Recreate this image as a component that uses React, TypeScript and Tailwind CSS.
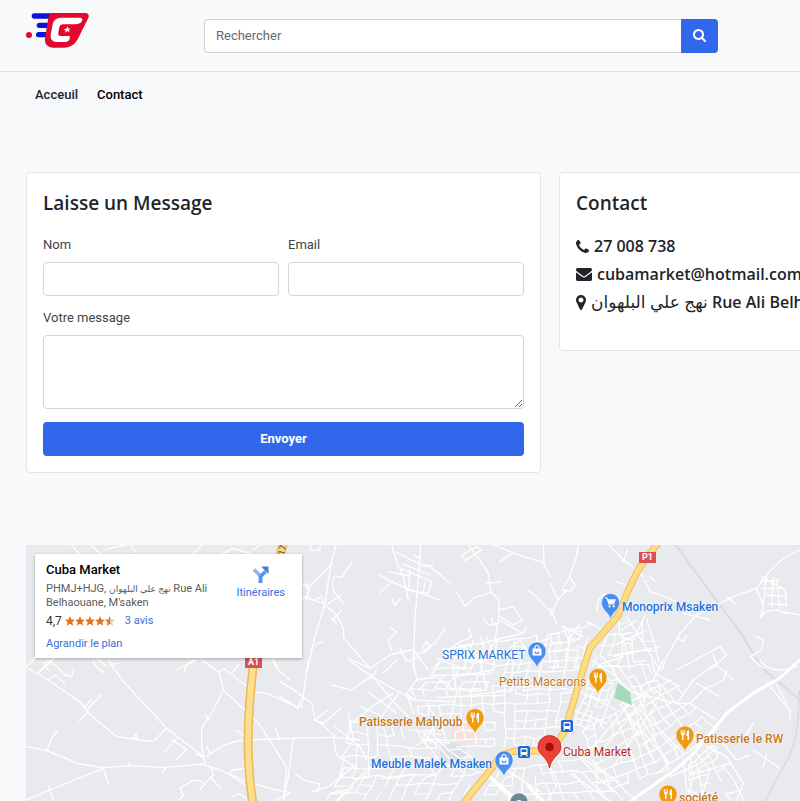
import React from "react";

type Point = [number, number];

/** Builds a slightly irregular street grid inside a four-cornered district. */
function streetGrid(corners: [Point, Point, Point, Point], cols: number, rows: number, seed: number, keep = 0.8) {
  let state = seed;
  const random = () => {
    state = (state * 16807) % 2147483647;
    return state / 2147483647;
  };
  const [a, b, c, d] = corners;
  const nodes: Point[][] = [];
  for (let r = 0; r <= rows; r++) {
    const line: Point[] = [];
    for (let q = 0; q <= cols; q++) {
      const u = q / cols;
      const v = r / rows;
      const at = (i: 0 | 1) =>
        (1 - u) * (1 - v) * a[i] + u * (1 - v) * b[i] + u * v * c[i] + (1 - u) * v * d[i] + (random() - 0.5) * 3;
      line.push([Math.round(at(0) * 10) / 10, Math.round(at(1) * 10) / 10]);
    }
    nodes.push(line);
  }
  let path = "";
  for (let r = 0; r <= rows; r++) {
    for (let q = 0; q <= cols; q++) {
      if (q < cols && random() < keep) path += `M${nodes[r][q]}L${nodes[r][q + 1]}`;
      if (r < rows && random() < keep) path += `M${nodes[r][q]}L${nodes[r + 1][q]}`;
    }
  }
  return path;
}

const districts = [
  streetGrid([[452, 648], [580, 630], [576, 690], [420, 690]], 12, 6, 11, 0.75),
  streetGrid([[412, 690], [574, 684], [562, 745], [428, 748]], 14, 7, 23, 0.75),
  streetGrid([[352, 720], [440, 735], [490, 772], [340, 780]], 11, 5, 37, 0.65),
  streetGrid([[345, 768], [480, 765], [460, 803], [325, 803]], 11, 4, 41, 0.75),
  streetGrid([[500, 770], [590, 758], [640, 803], [478, 803]], 11, 4, 53, 0.8),
  streetGrid([[590, 682], [612, 684], [592, 730], [574, 724]], 3, 6, 61, 0.95),
  streetGrid([[622, 705], [670, 680], [716, 730], [660, 772]], 6, 7, 71, 0.85),
  streetGrid([[584, 730], [640, 700], [668, 768], [600, 792]], 7, 7, 83, 0.8),
  streetGrid([[612, 625], [648, 620], [660, 660], [592, 668]], 5, 4, 97, 0.7),
  streetGrid([[552, 635], [590, 625], [582, 668], [548, 668]], 4, 4, 101, 0.75),
  streetGrid([[600, 668], [650, 665], [660, 690], [625, 705]], 5, 3, 107, 0.7),
  streetGrid([[690, 765], [712, 745], [745, 803], [690, 803]], 4, 5, 113, 0.6),
];

/* Hand-traced lanes, one list per survey tile of the map. */
const tiles = [
  {
    origin: "translate(20 540) scale(0.33333)",
    roads: [
      "M150 10 L180 45 M210 10 L240 42 M255 28 L330 12 M330 12 L350 42 M520 42 L550 10 M600 45 L640 25 L690 40 M730 8 L700 30",
      "M845 130 L870 150 M845 175 L870 170 M18 380 L45 355 M85 390 L70 370 L110 352 M230 355 L260 380 M470 390 L530 360 M760 355 L775 390",
    ],
  },
  {
    origin: "translate(300 540) scale(0.33333)",
    roads: [
      "M108 14 L92 75 L75 190 L45 290 L22 390",
      "M10 170 L70 190 L110 225 L130 265 L132 295 L210 385 L270 345 L340 328 L385 390 M210 385 L145 355",
      "M15 130 L28 140 L18 180 M28 140 L95 72 M155 65 L125 112 L105 108 L97 125 L102 155 L130 190 M85 190 L125 165 M45 182 L65 168 L70 190 M95 240 L125 212 M98 235 L110 252 M45 315 L68 305",
      "M30 15 L35 32 L58 30 L62 14 M362 14 L355 120 L345 230 L340 390 M275 14 L290 65 L310 110 L325 180",
      "M290 38 L350 68 L390 80 L452 130 M310 72 L390 105 M300 85 L395 125 L385 160 L320 150 M265 95 L330 108 M240 105 L275 125 L320 145 L420 180 M340 45 L360 55 M270 130 L240 158 M275 175 L285 195 L302 175 M330 88 L325 150 M375 125 L370 155 M400 75 L365 80",
      "M505 14 L535 55 L565 100 L572 155 L598 180 L595 240 L585 300 M485 45 L530 20 L545 30 L495 62 L485 45 M575 155 L520 175 L495 200 L488 185 L468 155 M560 130 L605 125 M595 210 L640 200 L665 240 L640 255 L600 230",
      "M580 14 L640 40 L730 68 L750 110 M600 65 L635 42 M730 14 L732 68 M682 150 L710 170 L750 215 M550 235 L565 255 L595 250 M575 235 L580 258",
      "M270 262 L290 275 L265 300 L275 332 M435 265 L405 310 L350 345 M365 325 L380 305 L392 320 L370 340 M505 265 L515 290 L470 310 L395 390 M600 240 L668 280 L680 262 M668 280 L540 310 L430 330 M540 290 L560 340 L610 335 M300 325 L320 365 L360 350 M430 325 L520 370 L600 350 M410 355 L500 390",
      "M560 290 L575 330 M470 310 L540 350 M590 300 L580 390 M610 340 L660 300 L680 330 M700 310 L750 295 M520 300 L490 390 M430 345 L590 375",
    ],
  },
  {
    origin: "translate(550 540) scale(0.33333)",
    roads: [
      "M85 14 L78 55 L58 110 L75 135 L60 155 L35 150 L60 110 M0 130 L25 180 L0 230 M25 180 L50 150 M0 205 L20 250",
      "M175 14 L215 55 L265 95 M210 45 L220 65 L232 30 M200 125 L225 135 M262 95 L280 110 M285 120 L300 155 L335 165 L380 185 M300 110 L315 125",
      "M765 24 C690 50 650 100 620 145 L550 170 L440 225 L390 280 L350 350 L335 390",
      "M620 145 L640 200 L630 235 L645 215 L680 210 L710 220 M635 110 L705 150 L710 200 M650 105 L640 190 M670 110 L665 200 M640 125 L685 120 M635 145 L695 145 M650 165 L710 170 M655 190 L705 195 M680 120 L690 205 M700 215 L750 225",
      "M140 215 L145 180 L165 160 M110 245 L160 270 M40 260 L55 300 L90 250 M530 170 L555 190 M480 240 L400 220 M385 295 L400 305 L410 285",
      "M40 260 L100 290 M205 235 L210 290 L245 300 M215 270 L260 240 M230 230 L330 390 M285 225 L270 260 L240 320 M205 310 L290 270 M190 350 L330 320 M225 310 L240 390 M170 290 L150 345 L195 390 M145 375 L220 350",
      "M380 390 L510 320 L530 345 L480 390 M620 290 L640 300 L635 330 L600 350 L640 385 M490 340 L500 380",
    ],
  },
  {
    origin: "translate(20 660) scale(0.33333)",
    roads: [
      "M18 22 L85 60 L185 130 L205 160 L290 230 L400 245 L440 205 M55 40 L95 0 M60 30 L95 5 L135 45 L155 50 L162 25 M85 60 L105 45 L135 70 M190 145 L215 118 M200 150 L245 103 M175 182 L205 155",
      "M265 0 L310 65 L390 150 L440 205 L550 290 M220 0 L225 15 L250 38 M270 15 L295 10 M18 260 L80 272 L180 312 L250 323 L340 317 L430 323 L545 312 L600 330 L680 365 L770 390 L810 397",
      "M82 270 L92 240 L113 210 M18 420 L90 390 L250 325 M85 380 L100 420 M250 325 L265 370 M340 235 L348 220 L350 238 M325 320 L330 307 M428 338 L437 325",
      "M545 0 L598 38 L610 90 L580 150 L545 205 L545 260 L555 310 M598 38 L610 25 L680 78 M635 40 L655 15 M610 90 L675 150 L720 195 L800 322 L790 423 M555 165 L570 180",
      "M435 275 L470 235 M470 298 L500 268 L455 240 M530 280 L545 290 M560 290 C590 265 630 242 680 240 L810 235 M560 258 L570 280 M650 210 L680 235 M710 98 C740 92 780 120 810 132 M765 205 L778 235 M755 0 L775 30 L810 60 M630 345 L635 330 L670 325",
      "M550 365 L520 360 L480 385 L490 405 L478 420 M575 325 L580 345 L560 365 L540 390 M570 350 L602 386 M640 410 L655 400 L680 415 M630 345 L700 390 M492 35 L500 15 L520 0 M760 423 L810 400",
    ],
  },
  {
    origin: "translate(280 660) scale(0.33333)",
    roads: [
      "M85 0 L65 140 M0 65 L50 95 L95 130 L105 175 L165 228 M0 110 L55 145 L60 125 M0 235 L160 232 L240 240 M40 235 L25 350 L10 423 M100 180 L130 190 L185 143 M110 175 L145 150",
      "M205 0 L275 50 L400 120 L520 125 M275 50 L212 90 L155 75 M275 50 L290 30 M400 0 L410 60 L380 100 L400 120 M310 40 L330 20 L350 0 M410 60 L470 50 L520 90",
      "M340 100 L290 130 L240 170 L205 195 M275 45 L340 125 L385 170 M360 95 L300 175 M265 95 L350 160 M240 140 L300 165 M380 100 L400 160 M205 160 L220 240 L180 300 M160 235 L170 285 L225 320 M165 200 L240 260 L260 300",
      "M45 340 L70 360 L120 372 M95 395 L145 380 L220 320 M120 372 L110 395 M150 400 L200 390 L260 330 M170 423 L220 380",
      "M620 345 L700 423 M680 330 L780 395 M440 130 L470 180 L440 240 L410 255 M520 20 L530 100 L510 180 M530 50 L640 30 M600 0 L620 90 M700 0 L690 100 M540 110 L700 90",
    ],
  },
  {
    origin: "translate(530 660) scale(0.33333)",
    roads: [
      "M185 0 L260 50 L300 95 L440 130 L480 130 L560 180 M365 0 L375 40 L450 80 M400 0 L370 60 L330 80 L345 130 M440 130 L490 60 L550 15 M480 130 L520 90 L580 60 L590 30 M500 70 L570 110 M560 15 L610 60",
      "M720 80 L780 150 L780 180 M740 75 L770 130 M690 0 C710 35 760 35 800 20 M570 240 L620 300 L660 285 M670 190 L640 240 L560 250 M670 270 L750 325 M710 280 L700 320 M480 290 L490 350 L470 423 M530 260 L590 290 L640 370 L620 423",
      "M300 130 L240 200 L160 300 M330 150 L460 280 M290 160 L420 310 M350 110 L200 290 M380 130 L250 320 M140 90 L260 150 M130 150 L230 190 M250 90 L210 200 M60 330 L80 380 L50 423 M90 255 L150 290 L240 350 M120 340 L240 423",
      "M460 300 L470 390 L560 423 M500 280 L540 330 L510 423 M560 260 L510 310 L420 350 M600 310 L480 345",
    ],
  },
];

const BLUE = "#4c8df0";
const ORANGE = "#f09a0e";

function Pin({ x, y, color, kind }: { x: number; y: number; color: string; kind: "bag" | "cart" | "food" | "dot" }) {
  return (
    <g transform={`translate(${x} ${y})`}>
      <path d="M0 17 C-1 10 -9 8 -9 0 A9 9 0 1 1 9 0 C9 8 1 10 0 17Z" fill={color} stroke="#ffffff" strokeOpacity=".6" strokeWidth=".7" />
      {kind === "bag" && (
        <>
          <path d="M-4.5 -2.5h9v7h-9z" fill="#fff" />
          <path d="M-2 -2v-1.5a2 2 0 0 1 4 0V-2" fill="none" stroke="#fff" strokeWidth="1.2" />
          <path d="M-2 .5a2 2 0 0 0 4 0" fill="none" stroke={color} strokeWidth="1.1" />
        </>
      )}
      {kind === "cart" && (
        <>
          <path d="M-5.5 -4.5h2l2 6h5.5" fill="none" stroke="#fff" strokeWidth="1.2" />
          <path d="M-3 -3.2h8.5L3.8 1H-1.6z" fill="#fff" />
          <circle cx="-1" cy="3.8" r="1.1" fill="#fff" />
          <circle cx="3.3" cy="3.8" r="1.1" fill="#fff" />
        </>
      )}
      {kind === "food" && (
        <>
          <path d="M-4.2 -5v3.4q0 1.6 1.2 1.8V5h1.5V.2q1.3 -.2 1.3 -1.8V-5h-.9v3h-.7v-3h-.8v3h-.7v-3z" fill="#fff" />
          <path d="M4 -5q-2.6 .6 -2.6 4v2h1.1v4H4z" fill="#fff" />
        </>
      )}
      {kind === "dot" && <circle r="3" cy="1" fill="#fff" />}
    </g>
  );
}

function BusStop({ x, y }: { x: number; y: number }) {
  return (
    <g transform={`translate(${x} ${y})`}>
      <rect x="-6" y="-6" width="12" height="12" rx="2" fill="#1a66d8" />
      <rect x="-3.5" y="-4" width="7" height="7" rx="1.2" fill="#fff" />
      <path d="M-2.4 -2.6h4.8v2.6h-4.8z" fill="#1a66d8" />
      <path d="M-3 3v1.4M3 3v1.4" stroke="#fff" strokeWidth="1.3" />
    </g>
  );
}

function MapDrawing() {
  const p1 = "M662 538 L645 560 L637 572 L628 591 L618 616 L603 633 L590 648 L585 663 L574 700 L565 730 L557 744 Q550 752 538 751 L518 751 Q502 752 495 764 L462 805";
  const a1 = "M284 540 C272 590 258 630 253 668 C247 720 246 760 253 805";
  return (
    <svg className="block h-full w-[774px]" viewBox="26 545 774 256" fill="none" aria-hidden="true">
      <rect x="26" y="545" width="774" height="256" fill="#e8eaed" />
      <path d="M454 723 L473 717 L481 739 L462 744 L450 735Z" fill="#f7e1e0" />
      <path d="M440 748 Q455 738 466 748 L464 760 L440 762Z" fill="#dcdfe5" />
      <path d="M672 540 L740 632 L762 668 L800 700" stroke="#d6d8dc" strokeWidth="1.5" />
      <path d="M799 690 Q800 740 786 762 L765 801" stroke="#d9dbdf" strokeWidth="1.5" />
      <g stroke="#fff" strokeLinejoin="round" strokeLinecap="round">
        {districts.map((d, i) => (
          <path key={i} d={d} strokeWidth="1.2" />
        ))}
        {tiles.map((tile) => (
          <g key={tile.origin} transform={tile.origin} strokeWidth="4">
            {tile.roads.map((d) => (
              <path key={d} d={d} />
            ))}
          </g>
        ))}
        <path d="M802 658 L780 678 L755 692 L728 712 L708 736 L692 755 L675 770 L628 803" strokeWidth="3" />
        <path d="M485 772 L520 803 M528 786 L545 803" strokeWidth="3" />
      </g>
      <path d="M618 683 L630 692 L632 705 L614 698Z" fill="#a5dab6" />
      <g strokeLinejoin="round">
        <path d={a1} stroke="#efb754" strokeWidth="9" />
        <path d={a1} stroke="#fbdf8e" strokeWidth="6" />
        <path d={p1} stroke="#f0bc5c" strokeWidth="7" />
        <path d={p1} stroke="#fddc83" strokeWidth="5" />
      </g>
      <Pin x={610.5} y={602.5} color={BLUE} kind="cart" />
      <Pin x={537} y={651} color={BLUE} kind="bag" />
      <Pin x={504} y={760} color={BLUE} kind="bag" />
      <Pin x={598} y={677.5} color={ORANGE} kind="food" />
      <Pin x={475} y={717.5} color={ORANGE} kind="food" />
      <Pin x={685} y={735} color={ORANGE} kind="food" />
      <Pin x={668} y={794} color={ORANGE} kind="food" />
      <Pin x={519} y={802} color="#6f8792" kind="dot" />
      <BusStop x={567} y={726} />
      <BusStop x={524} y={752} />
      <path d="M549.5 768 C548 757 538 755 538 747 A11.5 11.5 0 1 1 561 747 C561 755 551 757 549.5 768Z" fill="#ea4335" stroke="#c5221f" strokeWidth=".8" />
      <circle cx="549.5" cy="747" r="4.3" fill="#a50e0e" />
    </svg>
  );
}

const halo = "[text-shadow:0_0_2px_#fff,0_0_2px_#fff,0_0_1px_#fff]";

const places = [
  { name: "Monoprix Msaken", look: "left-[596px] top-[54px] font-medium text-[#2470d8]" },
  { name: "SPRIX MARKET", look: "left-[416px] top-[102px] text-[#2470d8]" },
  { name: "Petits Macarons", look: "left-[473px] top-[129px] text-[#c4761c]" },
  { name: "Patisserie Mahjoub", look: "left-[333px] top-[169px] font-medium text-[#c4761c]" },
  { name: "Meuble Malek Msaken", look: "left-[345px] top-[211px] font-medium text-[#2470d8]" },
  { name: "Cuba Market", look: "left-[537px] top-[199px] text-[#b3261e]" },
  { name: "Patisserie le RW", look: "left-[670px] top-[186px] font-medium text-[#c4761c]" },
  { name: "société", look: "left-[653px] top-[245px] font-medium text-[#c4761c]" },
];

function Star({ half = false }: { half?: boolean }) {
  const d = "M5 0 6.4 3.4 10 3.7 7.3 6.1 8.1 9.7 5 7.8 1.9 9.7 2.7 6.1 0 3.7 3.6 3.4Z";
  return (
    <svg className="size-[10px]" viewBox="0 0 10 10" aria-hidden="true">
      <path d={d} fill={half ? "#d3cdc8" : "#e7711b"} />
      {half && <path d="M5 0V7.8L1.9 9.7 2.7 6.1 0 3.7 3.6 3.4Z" fill="#e7711b" />}
    </svg>
  );
}

function PlaceCard() {
  return (
    <div className="absolute left-[9px] top-[9px] flex h-[104px] w-[267px] justify-between bg-white px-[11px] pt-2 text-[11px] text-[#5b5b5b] shadow-[0_1px_3px_rgba(0,0,0,0.3)]">
      <div className="whitespace-nowrap">
        <h3 className="text-[13px] font-medium leading-4 text-black">Cuba Market</h3>
        <p className="mt-1 leading-[13px]">
          PHMJ+HJG, <bdi className="text-[9px]">نهج علي البلهوان</bdi> Rue Ali
          <br />
          Belhaouane, M'saken
        </p>
        <div className="mt-1 flex items-center leading-4">
          <span className="text-xs text-[#333]">4,7</span>
          <span className="ml-[3px] flex">
            <Star />
            <Star />
            <Star />
            <Star />
            <Star half />
          </span>
          <a href="#avis" className="ml-[10px] text-[#3a6fd8]">3 avis</a>
        </div>
        <a href="#plan" className="mt-[7px] block leading-4 text-[#3a6fd8]">Agrandir le plan</a>
      </div>
      <a href="#route" className="mr-[6px] mt-1 flex flex-col items-center self-start text-[#3a6fd8]">
        <svg className="size-[17px]" viewBox="0 0 17 17" fill="none" aria-hidden="true">
          <path d="M8.5 17V10L2 3.5" stroke="#8db4f0" strokeWidth="3.6" />
          <path d="M8.5 17V10.5L13.5 5.5" stroke="#5b93e6" strokeWidth="3.6" />
          <path d="M9 .5H16.5V8Z" fill="#3f7fdd" />
        </svg>
        <span className="mt-[2px] leading-4">Itinéraires</span>
      </a>
    </div>
  );
}

function Logo() {
  return (
    <svg className="h-[35px] w-[63px]" viewBox="0 0 189 105" role="img" aria-label="Cuba Market">
      <g stroke="#0a12dc" strokeWidth="16" strokeLinecap="round">
        <path d="M25 9H80M40 37H70M38 65H70" />
      </g>
      <circle cx="9" cy="66" r="9" fill="#e20a2c" />
      <path d="M78 0H178Q192 2 187 15L155 79Q142 103 116 104H80Q54 102 57 76L67 14Q70 2 78 0Z" fill="#e20a2c" />
      <path d="M162 14H105Q84 15 80 34L74 66Q72 86 92 87H120Q134 84 131 69H103Q95 68 97 59L100 42Q102 34 110 34H150Q166 32 169 22Q170 14 162 14Z" fill="#fff" />
      <path d="M125 40 127 47 134 46 129 51 131 58 124 54 117 59 119 52 112 49 121 47Z" fill="#fff" />
    </svg>
  );
}

const iconPaths = {
  phone: "M1408 1240q0 27-10 70.5t-21 68.5q-21 50-122 106-94 51-186 51-27 0-53-3.5t-57.5-12.5-47-14.5-55.5-20.5-49-18q-98-35-175-83-127-79-264-216t-216-264q-48-77-83-175-3-9-18-49t-20.5-55.5-14.5-47-12.5-57.5-3.5-53q0-92 51-186 56-101 106-122 25-11 68.5-21t70.5-10q14 0 21 3 18 6 53 76 11 19 30 54t35 63.5 31 53.5q3 4 17.5 25t21.5 35.5 7 28.5q0 20-28.5 50t-62 55-62 53-28.5 46q0 9 5 22.5t8.5 20.5 14 24 11.5 19q76 137 174 235t235 174q2 1 19 11.5t24 14 20.5 8.5 22.5 5q18 0 46-28.5t53-62 55-62 50-28.5q14 0 28.5 7t35.5 21.5 25 17.5q25 15 53.5 31t63.5 35 54 30q70 35 76 53 3 7 3 21z",
  mail: "M1792 710v794q0 66-47 113t-113 47h-1472q-66 0-113-47t-47-113v-794q44 49 101 87 362 246 497 345 57 42 92.5 65.5t94.5 48 110 24.5h2q51 0 110-24.5t94.5-48 92.5-65.5q170-123 498-345 57-39 100-87zm0-294q0 79-49 151t-122 123q-376 261-468 325-10 7-42.5 31t-54 38.5-52 32.5-57.5 27-50 9h-2q-23 0-50-9t-57.5-27-52-32.5-54-38.5-42.5-31q-91-64-262-182.5t-205-142.5q-62-42-117-115.5t-55-136.5q0-78 41.5-130t118.5-52h1472q65 0 112.5 47t47.5 113z",
  marker: "M768 640q0-106-75-181t-181-75-181 75-75 181 75 181 181 75 181-75 75-181zm256 0q0 109-33 179l-364 774q-16 33-47.5 52t-67.5 19-67.5-19-46.5-52l-365-774q-33-70-33-179 0-212 150-362t362-150 362 150 150 362z",
  search: "M1152 832q0-185-131.5-316.5t-316.5-131.5-316.5 131.5-131.5 316.5 131.5 316.5 316.5 131.5 316.5-131.5 131.5-316.5zm512 832q0 52-38 90t-90 38q-54 0-90-38l-343-342q-179 124-399 124-143 0-273.5-55.5t-225-150-150-225-55.5-273.5 55.5-273.5 150-225 225-150 273.5-55.5 273.5 55.5 225 150 150 225 55.5 273.5q0 220-124 399l343 343q37 37 37 90z",
};

const field = "w-full rounded border border-[#d3d6da] bg-white px-[11px] text-[13px] outline-none";
const cardBox = "rounded border border-[#e3e5e8] bg-white px-4 pt-4";
const heading = "font-['Open_Sans','Noto_Sans',sans-serif] text-[19px] font-semibold leading-7 text-[#212529]";

export default function App() {
  return (
    <div className="min-h-screen overflow-hidden bg-[#f8f9fb] font-[Roboto,'DejaVu_Sans',sans-serif] text-[13px] text-[#3f4347]">
      <header className="flex h-[72px] items-center border-b border-[#dee2e6] px-[26px]">
        <a href="#accueil" className="-mt-[10px] shrink-0">
          <Logo />
        </a>
        <form className="ml-[115px] flex h-[34px] max-w-[514px] flex-1" onSubmit={(e) => e.preventDefault()}>
          <input
            type="text"
            aria-label="Rechercher"
            placeholder="Rechercher"
            className="min-w-0 flex-1 rounded-l border border-r-0 border-[#ced4da] bg-white px-[11px] text-[13px] outline-none placeholder:text-[#666b70]"
          />
          <button type="submit" aria-label="Rechercher" className="flex w-[37px] items-center justify-center rounded-r bg-[#3167eb] text-white">
            <svg className="size-[13px]" viewBox="0 128 1664 1664" fill="currentColor" aria-hidden="true">
              <path d={iconPaths.search} />
            </svg>
          </button>
        </form>
      </header>

      <nav className="flex gap-[19px] px-[35px] pt-[13px] font-medium leading-5">
        <a href="#accueil" className="text-[#212529]">Acceuil</a>
        <a href="#contact" className="text-black">Contact</a>
      </nav>

      <main className="px-[26px] pt-[67px]">
        <div className="grid grid-cols-[515px_minmax(max-content,1fr)] items-start gap-[18px]">
          <section className={`${cardBox} pb-4`}>
            <h2 className={heading}>Laisse un Message</h2>
            <form className="mt-[18px]" onSubmit={(e) => e.preventDefault()}>
              <div className="grid grid-cols-2 gap-[9px]">
                <div>
                  <label htmlFor="nom" className="mb-[7px] block leading-5">Nom</label>
                  <input id="nom" type="text" className={`${field} block h-[34px]`} />
                </div>
                <div>
                  <label htmlFor="email" className="mb-[7px] block leading-5">Email</label>
                  <input id="email" type="email" className={`${field} block h-[34px]`} />
                </div>
              </div>
              <label htmlFor="message" className="mb-[7px] mt-3 block leading-5">Votre message</label>
              <textarea id="message" className={`${field} block h-[74px] resize-y`} />
              <button type="submit" className="mt-[13px] block h-[34px] w-full rounded bg-[#3167eb] font-bold text-white">
                Envoyer
              </button>
            </form>
          </section>

          <section className={`${cardBox} whitespace-nowrap pb-[34px]`}>
            <h2 className={heading}>Contact</h2>
            <ul className="mt-[15px] font-['Open_Sans','DejaVu_Sans',sans-serif] text-base font-semibold leading-7 text-[#212529]">
              <li className="flex h-7 items-center gap-[5px]">
                <svg className="size-[13px]" viewBox="0 128 1408 1408" fill="currentColor" aria-hidden="true">
                  <path d={iconPaths.phone} />
                </svg>
                27 008 738
              </li>
              <li className="flex h-7 items-center gap-[5px]">
                <svg className="h-[13px] w-4" viewBox="0 256 1792 1408" preserveAspectRatio="none" fill="currentColor" aria-hidden="true">
                  <path d={iconPaths.mail} />
                </svg>
                cubamarket@hotmail.com
              </li>
              <li className="flex h-7 items-center gap-[5px]">
                <svg className="h-[15px] w-[10px]" viewBox="0 128 1024 1536" fill="currentColor" aria-hidden="true">
                  <path d={iconPaths.marker} />
                </svg>
                <span>
                  <bdi className="text-[17px] font-normal">نهج علي البلهوان</bdi> Rue Ali Belhaouane, M'saken
                </span>
              </li>
            </ul>
          </section>
        </div>

        <section aria-label="Plan" className="relative -mr-[26px] mt-[72px] h-64 overflow-hidden bg-[#e8eaed]">
          <MapDrawing />
          {places.map((place) => (
            <span key={place.name} className={`absolute whitespace-nowrap text-xs leading-4 ${halo} ${place.look}`}>
              {place.name}
            </span>
          ))}
          <span className="absolute left-[613px] top-[7px] bg-[#dc4f52] px-[3px] text-[9px] font-bold leading-[11px] text-white">P1</span>
          <span className="absolute left-[219px] top-[112px] bg-[#dc4f52] px-[3px] text-[9px] font-bold leading-[11px] text-white">A1</span>
          <span className="absolute left-[251px] top-0 -rotate-75 text-[9px] font-bold leading-[10px] text-[#8b6a2b]">17</span>
          <PlaceCard />
        </section>
      </main>
    </div>
  );
}
